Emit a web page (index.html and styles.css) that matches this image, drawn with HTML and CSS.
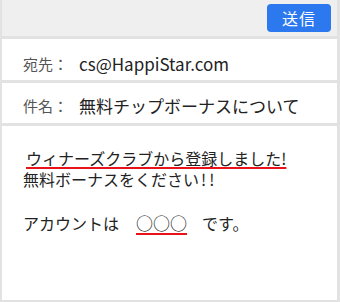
FILE: index.html
```html
<!DOCTYPE html>
<html lang="ja">
<head>
    <meta charset="UTF-8">
    <meta name="viewport" content="width=device-width, initial-scale=1.0">
    <title>メール作成</title>
    <link rel="stylesheet" href="styles.css">
</head>
<body>
    <div class="mail">
        <div class="toolbar">
            <button class="send-btn">送信</button>
        </div>

        <div class="field">
            <span class="field-label">宛先：</span>
            <span class="field-value">cs@HappiStar.com</span>
        </div>
        <div class="field field-subject">
            <span class="field-label">件名：</span>
            <span class="field-value">無料チップボーナスについて</span>
        </div>

        <div class="mail-body">
            <p class="line"><span class="mark">ウィナーズクラブから登録しました!</span></p>
            <p class="line">無料ボーナスをください<span class="bang">!!</span></p>
            <p class="line account">アカウントは<span class="mark blank">○○○</span>です。</p>
        </div>
    </div>
</body>
</html>
```

FILE: styles.css
```css
* {
    margin: 0;
    padding: 0;
    box-sizing: border-box;
}

body {
    font-family: 'Noto Sans CJK JP', 'Noto Sans', sans-serif;
    background: #fff;
    color: #222;
}

.mail {
    width: 340px;
    height: 302px;
    border: 2px solid #e2e2e2;
    border-top: 0;
    border-right-width: 3px;
    display: flex;
    flex-direction: column;
}

.toolbar {
    height: 36px;
    background: #efefef;
    display: flex;
    justify-content: flex-end;
    align-items: flex-start;
    padding: 4px 6px 0 0;
}

.send-btn {
    width: 64px;
    height: 28px;
    background: #2b78ef;
    color: #fff;
    border: none;
    border-radius: 4px;
    font-family: inherit;
    font-size: 16px;
    letter-spacing: 1px;
    cursor: pointer;
}

.field {
    height: 44px;
    border-top: 3px solid #e2e2e2;
    display: flex;
    align-items: center;
    padding: 8px 0 0 21px;
}

.field-subject {
    height: 43px;
    padding-top: 5px;
}

.field-label {
    width: 56px;
    font-size: 15px;
    color: #555;
}

.field-value {
    font-size: 17px;
    color: #222;
}

.mail-body {
    flex: 1;
    border-top: 3px solid #e2e2e2;
    padding: 22px 0 0 21px;
    font-size: 16px;
    line-height: 21px;
}

.mark {
    text-decoration: underline;
    text-decoration-color: #e8121b;
    text-decoration-thickness: 2px;
    text-underline-offset: 2px;
    padding: 0 1px 0 3px;
}

.bang {
    letter-spacing: 3px;
    margin-left: 2px;
}

.account {
    margin-top: 22px;
}

.blank {
    margin: 0 12px;
    padding: 0 3px 0 5px;
    font-size: 17px;
    text-underline-offset: 3px;
}
```
